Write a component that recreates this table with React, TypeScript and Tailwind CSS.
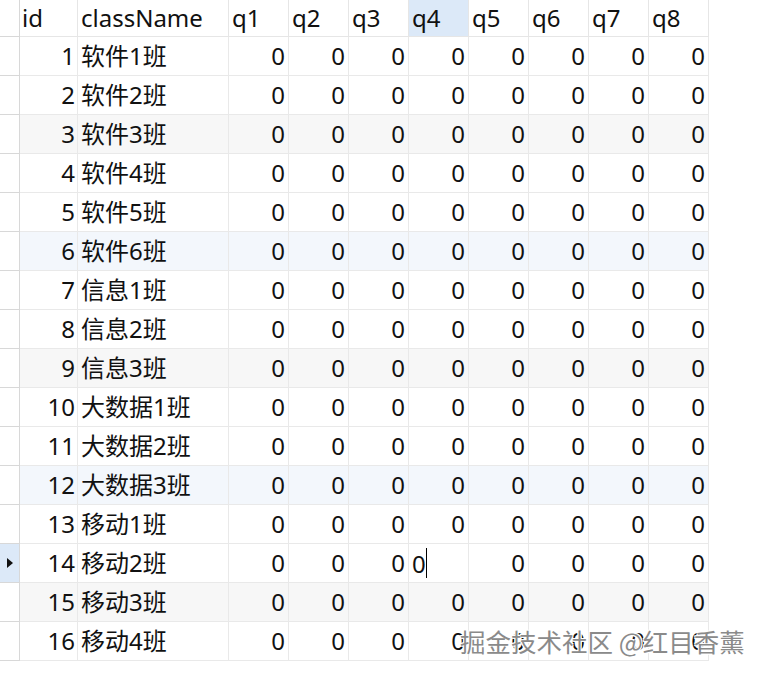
import React from "react";

const names = [
  "软件1班","软件2班","软件3班","软件4班","软件5班","软件6班",
  "信息1班","信息2班","信息3班","大数据1班","大数据2班","大数据3班",
  "移动1班","移动2班","移动3班","移动4班",
];

const qs = ["q1","q2","q3","q4","q5","q6","q7","q8"];

function rowBg(i: number) {
  const n = i + 1;
  if (n % 6 === 0) return "bg-[#f3f7fc]";
  if (n % 3 === 0) return "bg-[#f7f7f7]";
  return "bg-white";
}

export default function App() {
  const font = { fontFamily: '"Noto Sans", "Noto Sans CJK SC", sans-serif' };
  return (
    <div className="relative w-[766px] h-[677px] bg-white overflow-hidden text-[24px] text-[#111]" style={font}>
      <div className="grid grid-cols-[20px_58px_151px_repeat(8,60px)] w-[709px]">
        {/* header */}
        <div className="h-[37px] border-r border-b border-[#d8d8d8]"></div>
        <div className="h-[37px] border-r border-b border-[#e6e6e6] pl-[2px] leading-[36px]">id</div>
        <div className="h-[37px] border-r border-b border-[#e6e6e6] pl-[3px] leading-[36px]">className</div>
        {qs.map((q) => (
          <div key={q} className={`h-[37px] border-r border-b border-[#e6e6e6] pl-[3px] leading-[36px] ${q === "q4" ? "bg-[#dce9f8]" : ""}`}>{q}</div>
        ))}
        {names.map((name, i) => {
          const bg = rowBg(i);
          const editing = i === 13;
          return (
            <React.Fragment key={i}>
              <div className={`h-[39px] border-r border-b border-[#d8d8d8] flex items-center justify-center ${editing ? "bg-[#dce9f8]" : "bg-white"}`}>
                {editing && (
                  <svg width="8" height="12" viewBox="0 0 8 12"><path d="M1 1 L7 6 L1 11 Z" fill="#111" /></svg>
                )}
              </div>
              <div className={`h-[39px] border-r border-b border-[#e9e9e9] text-right pr-[2px] leading-[37px] ${bg}`}>{i + 1}</div>
              <div className={`h-[39px] border-r border-b border-[#e9e9e9] pl-[3px] leading-[37px] whitespace-nowrap ${bg}`}>{name}</div>
              {qs.map((q) => {
                if (editing && q === "q4") {
                  return (
                    <div key={q} className="h-[39px] border-r border-b border-[#e9e9e9] bg-white pl-[3px] leading-[37px] flex items-center">
                      <span>0</span>
                      <span className="inline-block w-[1px] h-[30px] bg-black"></span>
                    </div>
                  );
                }
                return (
                  <div key={q} className={`h-[39px] border-r border-b border-[#e9e9e9] text-right pr-[3px] leading-[37px] ${bg}`}>0</div>
                );
              })}
            </React.Fragment>
          );
        })}
      </div>
      <div
        className="absolute left-[460px] top-[622px] text-[25.5px] text-[#8a8a8a] whitespace-nowrap"
        style={{ fontFamily: '"Noto Sans CJK SC", sans-serif', textShadow: "1px 1px 0 #fff, -1px -1px 0 #fff, 1px -1px 0 #fff, -1px 1px 0 #fff" }}
      >
        掘金技术社区 @红目香薰
      </div>
    </div>
  );
}
